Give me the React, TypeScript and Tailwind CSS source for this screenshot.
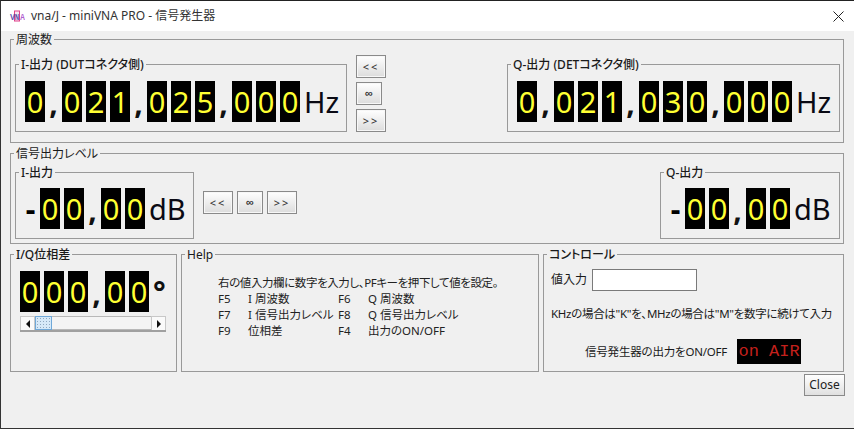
import React from "react";

const sans = "font-['Tahoma','Noto_Sans','Noto_Sans_CJK_JP',sans-serif] [font-feature-settings:'palt']";

function Box({ title, className, children, bold }: { title: string; className: string; children?: React.ReactNode; bold?: boolean }) {
  return (
    <fieldset className={`border border-[#999999] min-w-0 m-0 p-0 ${className}`}>
      <legend className={`ml-[3px] px-[2px] text-[12px] leading-[14px] text-[#1a1a1a] whitespace-nowrap translate-y-[1px] ${bold ? "font-medium" : ""}`}>{title}</legend>
      {children}
    </fieldset>
  );
}

function Digit({ v }: { v: string }) {
  return (
    <span className="w-[20px] h-[41px] bg-black text-[#ffff33] text-[29px] leading-[41px] text-center shrink-0">{v}</span>
  );
}

function Comma() {
  return <span className="w-[9px] h-[41px] shrink-0 text-[30px] leading-[41px] text-center font-bold text-[#111] translate-y-[1px]">,</span>;
}

function Readout({ text, unit, className, unitClass }: { text: string; unit: string; className?: string; unitClass?: string }) {
  return (
    <div className={`flex gap-[4px] items-center ${className ?? ""}`}>
      <div className="flex gap-[4px] items-center">
        {Array.from(text).map((c, i) => {
          if (c === ",") return <Comma key={i} />;
          if (c === "-") return <span key={i} className="w-[11px] text-[30px] leading-[41px] font-bold text-center text-black">-</span>;
          return <Digit key={i} v={c} />;
        })}
      </div>
      <span className={unitClass ?? "text-[29px] leading-[41px] text-[#0a0a14]"}>{unit}</span>
    </div>
  );
}

function Btn({ label, w, narrow }: { label: string; w: string; narrow?: boolean }) {
  return (
    <button className={`${w} h-[23px] border border-[#8a8a8a] bg-gradient-to-b from-white to-[#dcdcdc] leading-none text-[#333] shadow-[inset_0_0_0_1px_#f7f7f7] p-0 ${narrow ? "text-[11px] font-['Liberation_Sans',sans-serif] font-bold" : "text-[11px] font-medium tracking-[2px]"}`}>
      {label}
    </button>
  );
}

function Logo() {
  return (
    <svg width="16" height="16" viewBox="0 0 16 16" className="shrink-0">
      <rect x="5.5" y="3" width="5" height="10" fill="#f8e6f0" stroke="#e0408a" strokeWidth="1" />
      <text x="1" y="11.5" fontSize="8.5" fontWeight="700" fill="#5b4bb0" fontFamily="Liberation Sans" textLength="5" lengthAdjust="spacingAndGlyphs">V</text>
      <text x="6" y="11.5" fontSize="8.5" fontWeight="700" fill="#4a3aa0" fontFamily="Liberation Sans" textLength="4" lengthAdjust="spacingAndGlyphs">N</text>
      <text x="11" y="11.5" fontSize="8.5" fontWeight="700" fill="#b060d0" fontFamily="Liberation Sans" textLength="5" lengthAdjust="spacingAndGlyphs">A</text>
    </svg>
  );
}

function ScrollBar() {
  return (
    <div className="flex h-[16px] w-[146px] mt-[4px] ml-[9px] border-b-2 border-[#a0a0a0] bg-[#f1f1f1]">
      <div className="w-[15px] flex items-center justify-center bg-[#fafafa] border border-[#c8c8c8] border-b-0">
        <svg width="6" height="8" viewBox="0 0 6 8"><path d="M5 0 L1 4 L5 8 Z" fill="#111" /></svg>
      </div>
      <div className="w-[17px] border border-[#6fa8d8] bg-[#d6e9f8] bg-[radial-gradient(#8fa8c0_0.7px,transparent_0.8px)] bg-[length:3px_3px]" />
      <div className="flex-1 border-y border-[#b8b8b8] bg-[#f4f4f4]" />
      <div className="w-[15px] flex items-center justify-center bg-[#fafafa] border border-[#c8c8c8] border-b-0">
        <svg width="6" height="8" viewBox="0 0 6 8"><path d="M1 0 L5 4 L1 8 Z" fill="#111" /></svg>
      </div>
    </div>
  );
}

const helpRows = [
  ["F5", "I 周波数", "F6", "Q 周波数"],
  ["F7", "I 信号出力レベル", "F8", "Q 信号出力レベル"],
  ["F9", "位相差", "F4", "出力のON/OFF"],
];

export default function App() {
  return (
    <div className={`${sans} w-[854px] h-[429px] bg-[#f0f0f0] border-t border-t-[#222] border-b border-b-[#333] border-l border-l-[#333] flex flex-col overflow-hidden text-[#1a1a1a]`}>
      <div className="h-[30px] bg-white flex items-center pl-[8px] shrink-0">
        <Logo />
        <span className="ml-[6px] text-[12px] text-[#333]">vna/J - miniVNA PRO - 信号発生器</span>
        <svg width="11" height="11" viewBox="0 0 11 11" className="ml-auto mr-[10px]">
          <path d="M0.5 0.5 L10.5 10.5 M10.5 0.5 L0.5 10.5" stroke="#222" strokeWidth="1" fill="none" />
        </svg>
      </div>

      <div className="flex flex-col pl-[9px] pr-[10px] pt-[1px]">
        <Box title="周波数" className="h-[111px]">
          <div className="flex items-start pl-[4px] pr-[3px]">
            <Box title="I-出力 (DUTコネクタ側)" bold className="w-[332px] h-[75px] mt-[11px]">
              <Readout text="0,021,025,000" unit="Hz" className="pl-[9px] pt-[10px]" />
            </Box>
            <div className="flex flex-col gap-[4px] ml-[9px] mt-[9px] items-start">
              <Btn label="<<" w="w-[30px]" />
              <Btn label="∞" w="w-[26px]" narrow />
              <Btn label=">>" w="w-[30px]" />
            </div>
            <Box title="Q-出力 (DETコネクタ側)" bold className="w-[333px] h-[75px] mt-[11px] ml-auto">
              <Readout text="0,021,030,000" unit="Hz" className="pl-[9px] pt-[10px]" />
            </Box>
          </div>
        </Box>

        <Box title="信号出力レベル" className="h-[98px] mt-[3px]">
          <div className="flex items-start pl-[4px] pr-[3px]">
            <Box title="I-出力" bold className="w-[179px] h-[74px] mt-[5px]">
              <Readout text="-00,00" unit="dB" className="pl-[9px] pt-[9px]" />
            </Box>
            <div className="flex gap-[4px] ml-[9px] mt-[31px]">
              <Btn label="<<" w="w-[30px]" />
              <Btn label="∞" w="w-[26px]" narrow />
              <Btn label=">>" w="w-[30px]" />
            </div>
            <Box title="Q-出力" bold className="w-[180px] h-[74px] mt-[5px] ml-auto">
              <Readout text="-00,00" unit="dB" className="pl-[9px] pt-[9px]" />
            </Box>
          </div>
        </Box>

        <div className="flex gap-[4px] mt-[3px]">
          <Box title="I/Q位相差" bold className="w-[167px] h-[125px]">
            <Readout text="000,00" unit="°" className="pl-[9px] pt-[10px]" unitClass="text-[30px] leading-[41px] font-bold text-[#111]" />
            <ScrollBar />
          </Box>
          <Box title="Help" className="w-[358px] h-[125px]">
            <div className="pl-[36px] pt-[14px] text-[11.5px] leading-[16px] text-[#222] whitespace-nowrap">
              <div className="tracking-[-0.4px]">右の値入力欄に数字を入力し、PFキーを押下して値を設定。</div>
              {helpRows.map((r) => (
                <div key={r[0]} className="flex">
                  <span className="w-[30px]">{r[0]}</span>
                  <span className="w-[90px]">{r[1]}</span>
                  <span className="w-[30px]">{r[2]}</span>
                  <span>{r[3]}</span>
                </div>
              ))}
            </div>
          </Box>
          <Box title="コントロール" bold className="w-[301px] h-[125px]">
            <div className="flex items-center pl-[7px] pt-[8px] text-[12px]">
              <span>値入力</span>
              <input className="ml-[5px] w-[105px] h-[22px] bg-white border border-[#7a7a7a]" />
            </div>
            <div className="pl-[7px] mt-[15px] text-[11.5px] tracking-[-0.3px] leading-[16px] whitespace-nowrap">KHzの場合は"K"を、MHzの場合は"M"を数字に続けて入力</div>
            <div className="flex items-center mt-[17px] pl-[41px] text-[11.5px] tracking-[-0.2px]">
              <span>信号発生器の出力をON/OFF</span>
              <span className="ml-[10px] w-[64px] h-[25px] bg-black text-[#c4201c] text-[17px] tracking-normal leading-[25px] text-center font-['Liberation_Mono',monospace]">on AIR</span>
            </div>
          </Box>
        </div>

        <div className="flex justify-end mt-[2px]">
          <button className="w-[41px] h-[22px] border border-[#8a8a8a] bg-gradient-to-b from-white to-[#e0e0e0] text-[12px] text-[#222] p-0 -mr-[1px]">Close</button>
        </div>
      </div>
    </div>
  );
}
